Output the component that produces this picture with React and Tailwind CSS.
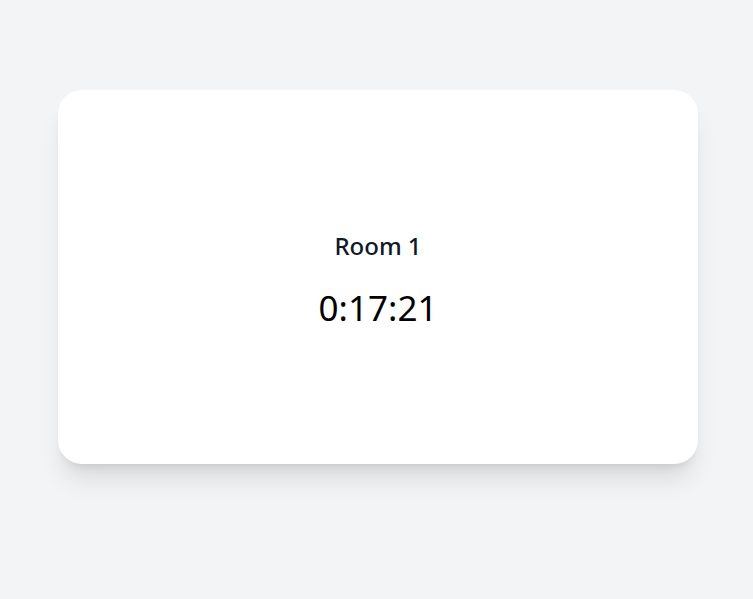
export default function App() {
  return (
    <div className="min-h-screen bg-[#f3f4f6] pt-[90px] pl-[58px] font-['Noto_Sans',sans-serif]">
      <div className="w-[640px] h-[374px] bg-white rounded-3xl shadow-xl flex flex-col items-center justify-center pt-[3px]">
        <h2 className="text-2xl font-medium text-gray-900 mb-[26px]">Room 1</h2>
        <div className="text-[35px] leading-10 text-black">0:17:21</div>
      </div>
    </div>
  );
}
